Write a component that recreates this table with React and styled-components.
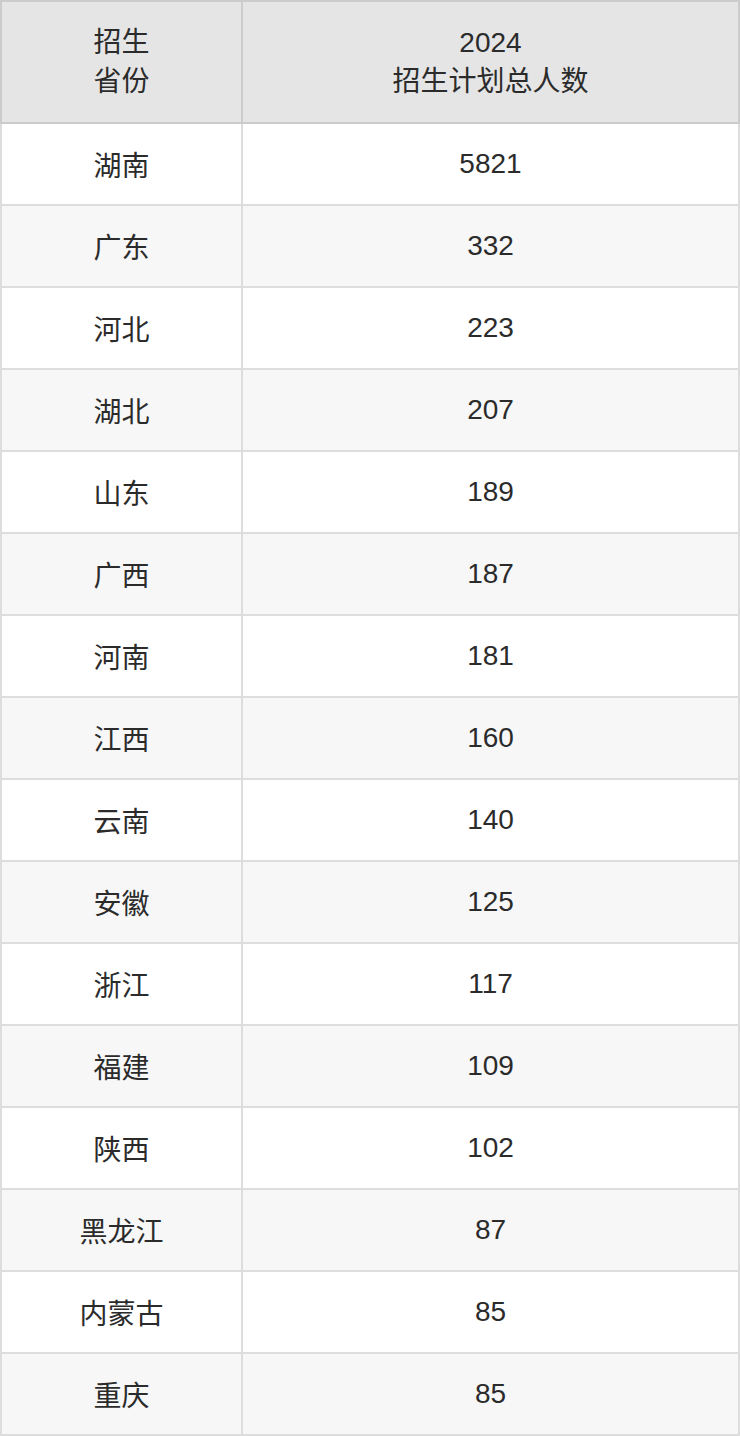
import React from 'react';
import styled, { createGlobalStyle } from 'styled-components';

const rows = [
  ['湖南', 5821],
  ['广东', 332],
  ['河北', 223],
  ['湖北', 207],
  ['山东', 189],
  ['广西', 187],
  ['河南', 181],
  ['江西', 160],
  ['云南', 140],
  ['安徽', 125],
  ['浙江', 117],
  ['福建', 109],
  ['陕西', 102],
  ['黑龙江', 87],
  ['内蒙古', 85],
  ['重庆', 85],
];

const GlobalStyle = createGlobalStyle`
  html, body {
    margin: 0;
    padding: 0;
    background: #fff;
  }
  body {
    font-family: "Liberation Sans", "Noto Sans CJK SC", sans-serif;
  }
`;

const Table = styled.table`
  width: 740px;
  border-collapse: separate;
  border-spacing: 0;
  table-layout: fixed;
  color: #2b2b2b;
  font-size: 28px;
`;

const HeadCell = styled.th`
  box-sizing: border-box;
  height: 124px;
  padding: 0;
  font-weight: normal;
  line-height: 39px;
  text-align: center;
  background: #e5e5e5;
  border-top: 2px solid #cccccc;
  border-right: 2px solid #cccccc;
  border-bottom: 2px solid #cccccc;
  border-left: ${p => (p.$first ? '2px solid #cccccc' : 'none')};
  width: ${p => p.$w}px;
`;

const Row = styled.tr`
  background: ${p => (p.$odd ? '#f7f7f7' : '#ffffff')};
`;

const Cell = styled.td`
  box-sizing: border-box;
  height: 82px;
  padding: 0;
  text-align: center;
  border-right: 2px solid #dddddd;
  border-bottom: 2px solid #dddddd;
  border-left: ${p => (p.$first ? '2px solid #dddddd' : 'none')};
`;

export default function App() {
  return (
    <>
      <GlobalStyle />
      <Table>
        <thead>
          <tr>
            <HeadCell $first $w={243}>
              招生
              <br />
              省份
            </HeadCell>
            <HeadCell $w={497}>
              2024
              <br />
              招生计划总人数
            </HeadCell>
          </tr>
        </thead>
        <tbody>
          {rows.map(([name, count], i) => (
            <Row key={name + i} $odd={i % 2 === 1}>
              <Cell $first>{name}</Cell>
              <Cell>{count}</Cell>
            </Row>
          ))}
        </tbody>
      </Table>
    </>
  );
}
